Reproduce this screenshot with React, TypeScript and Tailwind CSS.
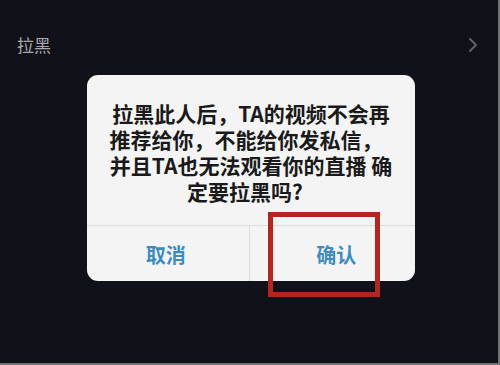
const FONT = "font-['PingFang_SC','Noto_Sans_CJK_SC',sans-serif]";

const ChevronRight = () => (
    <svg width="10" height="16" viewBox="0 0 10 16" fill="none">
        <path d="M2 2l6 6-6 6" stroke="#5f6068" strokeWidth="2" strokeLinecap="round" strokeLinejoin="round" />
    </svg>
);

const BlockRow = () => (
    <div className="flex items-center justify-between h-[34px] mt-[28px] pl-[17px] pr-[20px]">
        <span className="text-[17px] text-[#a9aaae]">拉黑</span>
        <ChevronRight />
    </div>
);

const ConfirmDialog = () => (
    <div className="relative ml-[87px] mt-[13px] w-[328px] h-[206px] rounded-[11px] bg-[#f4f4f4] flex flex-col">
        <div className="h-[150px] pt-[25px] text-center text-[21px] leading-[26px] font-bold text-[#1a1a1a] whitespace-nowrap">
            <p>拉黑此人后，TA的视频不会再</p>
            <p className="pr-[10px]">推荐给你，不能给你发私信，</p>
            <p>并且TA也无法观看你的直播 确</p>
            <p className="pr-[12px]">定要拉黑吗?</p>
        </div>
        <div className="flex flex-1 border-t border-[#dcdcdc]">
            <button className="flex-1 flex items-center justify-center text-[20px] font-bold text-[#3d8cc0] border-r border-[#dcdcdc] pr-[4px] pt-[2px]">
                取消
            </button>
            <button className="flex-1 flex items-center justify-center text-[20px] font-bold text-[#3d8cc0] pt-[2px] pl-[8px]">
                确认
            </button>
        </div>
        <div className="absolute left-[181px] top-[137px] w-[112px] h-[85px] border-[5px] border-[#b52520]" />
    </div>
);

export default function App() {
    return (
        <div className={`w-[500px] h-[365px] overflow-hidden bg-[#111219] border-r-2 border-b-2 border-[#6f7177] ${FONT}`}>
            <BlockRow />
            <ConfirmDialog />
        </div>
    );
}
